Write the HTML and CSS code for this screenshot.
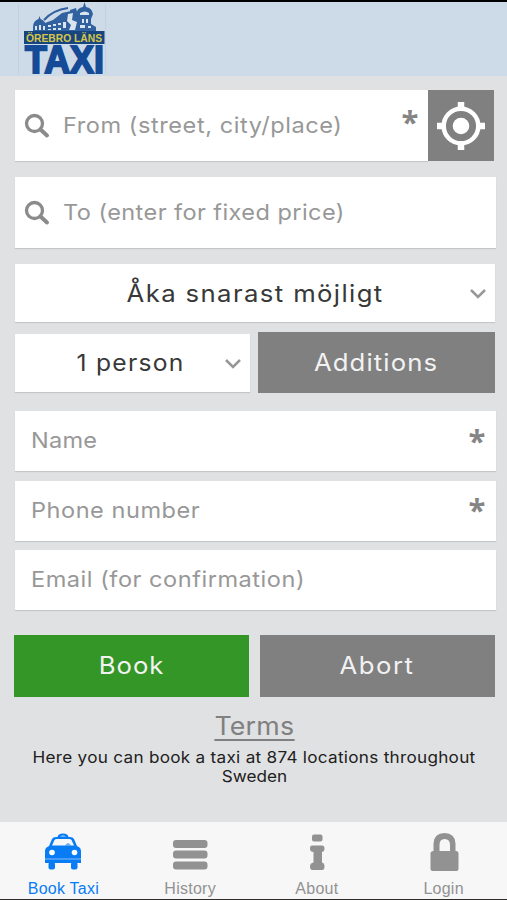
FILE: index.html
```
<!DOCTYPE html>
<html lang="en">
<head>
<meta charset="utf-8">
<title>Örebro Läns Taxi</title>
<link rel="stylesheet" href="styles.css">
</head>
<body>
<header class="header">
  <svg class="logo" width="90" height="74" viewBox="17 2 90 74" role="img" aria-label="Örebro Läns Taxi">
    <path d="M18.500 4V74M105.500 4V74" stroke="#c3d1df" stroke-width="1" fill="none"/>
    <g fill="#31619f">
      <path d="M33 31V27Q33 21 38.500 19L39.500 16L40.500 19Q46 21 46 27V31Z"/>
      <path d="M45 31V23L53 20L62 13L71 11V31Z"/>
      <path d="M70 10L76 8L77 12L81 18V31H70Z"/>
      <path d="M76 14Q77 8 83 7L84.500 2L86 7Q92 8 93 14L91 19V24L96 27V31H80V20Z"/>
    </g>
    <path d="M44 20Q53 10 68 8" fill="none" stroke="#31619f" stroke-width="2"/>
    <g fill="#d8e4ee">
      <path d="M35 26h2v4h-2zM39 25h2v5h-2zM43 26h2v4h-2zM48 25h3v2h-3zM53 24h3v2h-3zM58 23h3v2h-3zM48 29h3v1h-3zM53 28h3v2h-3zM58 28h3v2h-3zM63 22h3v6h-3z"/>
      <path d="M68 14L73 13L72 20L77 22L75 30H69L71 25L67 21ZM80 13Q85 10 89 13V15H80ZM82 19h2v4h-2zM86 19h2v4h-2zM80 25h5v3h-5zM88 26h3v2h-3z"/>
    </g>
    <rect x="24" y="31" width="80.500" height="13" fill="#17457f"/>
    <text class="logo-name" x="26" y="41.800" textLength="76" lengthAdjust="spacingAndGlyphs">ÖREBRO LÄNS</text>
    <text class="logo-taxi" x="25" y="72.500" textLength="79" lengthAdjust="spacingAndGlyphs">TAXI</text>
  </svg>
</header>
<main class="form">
  <div class="from">
    <div class="field tall">
      <svg class="search" width="26" height="26" viewBox="0 0 26 26"><circle cx="10.500" cy="10.500" r="8"/><path d="M16.500 16.500L23 22.500" class="handle"/></svg>
      <span class="hint t-from">From (street, city/place)</span>
      <span class="star raised">*</span>
    </div>
    <div class="locate">
      <svg width="48" height="48" viewBox="0 0 48 48"><circle cx="24" cy="24" r="17.300" fill="none" stroke="#fff" stroke-width="4.500"/><circle cx="24" cy="24" r="8.300" fill="#fff"/><path d="M24 0V8M24 40V48M0 24H8M40 24H48" stroke="#fff" stroke-width="6.500"/></svg>
    </div>
  </div>
  <div class="field tall to">
    <svg class="search" width="26" height="26" viewBox="0 0 26 26"><circle cx="10.500" cy="10.500" r="8"/><path d="M16.500 16.500L23 22.500" class="handle"/></svg>
    <span class="hint t-to">To (enter for fixed price)</span>
  </div>
  <div class="field select when"><span class="wide t-when">Åka snarast möjligt</span><svg class="chevron" width="18" height="12" viewBox="0 0 18 12"><path d="M2 2L9 9L16 2"/></svg></div>
  <div class="row options">
    <div class="field select persons"><span class="wide t-person">1 person</span><svg class="chevron" width="18" height="12" viewBox="0 0 18 12"><path d="M2 2L9 9L16 2"/></svg></div>
    <div class="button additions"><span class="wide t-add">Additions</span></div>
  </div>
  <div class="contacts">
    <div class="field contact"><span class="hint t-name">Name</span><span class="star">*</span></div>
    <div class="field contact"><span class="hint t-phone">Phone number</span><span class="star">*</span></div>
    <div class="field contact"><span class="hint t-email">Email (for confirmation)</span></div>
  </div>
  <div class="row actions">
    <div class="button book"><span class="wide t-book">Book</span></div>
    <div class="button abort"><span class="wide t-abort">Abort</span></div>
  </div>
  <div class="terms"><span class="wide t-terms">Terms</span></div>
  <p class="note"><span class="wide t-note">Here you can book a taxi at 874 locations throughout</span><br><span class="wide">Sweden</span></p>
</main>
<nav class="tabs">
  <div class="tab active">
    <svg width="40" height="40" viewBox="0 0 40 40" fill="#087cf5">
      <path d="M14.500 5Q15 1.500 20 1.500T25.500 5Z"/><path d="M17 4.500Q20 2.500 23 4.500Z" fill="#cfe5fb"/>
      <path fill-rule="evenodd" d="M6 14L9 7Q10 5 13 5H27Q30 5 31 7L34 14Q38 15.500 38 19V31H2V19Q2 15.500 6 14ZM9 13.500H31L28.500 8Q28 7 26 7H14Q12 7 11.500 8Z"/>
      <path d="M22 13.500Q25 8.500 28 13.500Z" opacity=".6"/>
      <circle cx="9" cy="20.500" r="2.800" fill="#fff"/><circle cx="31.500" cy="20.500" r="2.800" fill="#fff"/>
      <path d="M2 27H38" stroke="#84bcf6" stroke-width="1"/>
      <rect x="5.500" y="30" width="6.500" height="7.500" rx="2"/><rect x="28" y="30" width="6.500" height="7.500" rx="2"/>
    </svg><span>Book Taxi</span>
  </div>
  <div class="tab">
    <svg width="40" height="40" viewBox="0 0 40 40" fill="#929292"><rect x="3" y="8" width="34.500" height="8" rx="3"/><rect x="3" y="18.500" width="34.500" height="8" rx="3"/><rect x="3" y="29.500" width="34.500" height="8" rx="3"/></svg><span>History</span>
  </div>
  <div class="tab">
    <svg width="40" height="40" viewBox="0 0 40 40" fill="#929292"><rect x="15" y="2.500" width="10.500" height="7" rx="2"/><path d="M15.500 13.500H25Q27.500 13.500 27.500 16.500T25 20V30.500Q27.500 31 27.500 34.500T25 38H15.500Q13 38 13 34.500T16.500 30.500V20Q13 20 13 16.500T15.500 13.500Z"/></svg><span>About</span>
  </div>
  <div class="tab">
    <svg width="40" height="40" viewBox="0 0 40 40" fill="#929292"><path fill-rule="evenodd" d="M9.500 19V11.500Q10 1 20.500 1T31.500 11.500V19H32Q34.500 19 34.500 21.500V37Q34.500 39 32.500 39H8.500Q6.500 39 6.500 37V21.500Q6.500 19 9.500 19ZM15.500 19H26V13Q26 7 20.700 7T15.500 13Z"/></svg><span>Login</span>
  </div>
</nav>
</body>
</html>
```
FILE: styles.css
```
* { box-sizing: border-box; }
body {
  margin: 0;
  width: 507px;
  height: 900px;
  display: flex;
  flex-direction: column;
  overflow: hidden;
  background: #e0e1e3;
  font-family: Inter, "Liberation Sans", sans-serif;
  font-size: 22px;
  font-weight: 400;
}
svg { display: block; flex: none; }
span { white-space: nowrap; }
.header { height: 76px; flex: none; border-top: 2px solid #000; background: #cddbe9; padding-left: 17px; }
.logo { overflow: visible; }
.logo-name { font: bold 11px "Liberation Sans", sans-serif; fill: #d5c54b; }
.logo-taxi { font: bold 38px "Liberation Sans", sans-serif; fill: #154b96; stroke: #154b96; stroke-width: 2; }
.form { flex: 1; padding: 14px 12px 0 15px; }
.from { display: flex; width: 479px; }
.from .field { flex: 1; }
.locate { width: 66px; height: 71px; background: #808080; display: flex; align-items: center; justify-content: center; }
.field { background: #fff; box-shadow: 0 1px 1px #c5c6c7; display: flex; align-items: center; width: 481px; }
.tall { height: 71px; padding-left: 9px; }
.search { fill: none; stroke: #8b8b8b; stroke-width: 3.3; margin-right: 12.5px; }
.handle { stroke-width: 4; stroke-linecap: round; }
.hint { color: #989898; display: inline-block; margin-bottom: 2px; transform: scaleX(1.07); transform-origin: left; }
.wide { display: inline-block; transform: scaleX(1.07); }
.t-from { letter-spacing: .53px; }
.t-to { letter-spacing: .4px; }
.t-when { letter-spacing: 1.3px; }
.t-person { letter-spacing: 1.2px; }
.t-add { letter-spacing: 1.05px; }
.t-name { letter-spacing: .2px; }
.t-phone { letter-spacing: .5px; }
.t-email { letter-spacing: .5px; }
.t-book { letter-spacing: .9px; }
.t-abort { letter-spacing: 1.4px; }
.t-terms { letter-spacing: .2px; }
.t-note { letter-spacing: .27px; }
.star { margin-left: auto; width: 20px; height: 36px; margin-right: 9px; text-align: center; font: bold 31px/38px "Open Sans", sans-serif; color: #858585; }
.raised { margin-right: 8px; margin-top: -12px; }
.contact .star { margin-top: -5px; }
.to { margin-top: 16px; }
.select { height: 58px; position: relative; justify-content: center; color: #383838; }
.when { width: 480px; margin-top: 16px; font-size: 24px; }
.chevron { position: absolute; right: 8px; top: 24px; fill: none; stroke: #979797; stroke-width: 2.5; }
.row { display: flex; }
.options { margin-top: 10px; align-items: center; gap: 8px; }
.persons { width: 235px; font-size: 23px; }
.t-person { margin-right: 3px; }
.button { height: 61px; background: #808080; color: #f2f2f2; font-size: 24px; display: flex; align-items: center; justify-content: center; }
.additions { width: 237px; }
.contacts { margin-top: 18px; display: flex; flex-direction: column; gap: 9.500px; }
.contact { height: 60px; padding-left: 15.500px; }
.actions { margin: 25px 0 0 -1.500px; gap: 11px; }
.actions .button { height: 62px; padding-bottom: 2px; }
.book { width: 235.500px; background: #349626; }
.abort { width: 234.500px; }
.terms { width: 478px; margin-top: 12px; height: 35px; line-height: 34px; text-align: center; font-size: 25px; color: #808080; }
.terms span { border-bottom: 2px solid #808080; line-height: 28px; height: 29px; }
.note { width: 478px; margin: 4px 0 0; text-align: center; font-size: 16px; line-height: 19px; color: #202020; }
.tabs { height: 78px; flex: none; background: #f7f7f7; border-bottom: 1px solid #302c2c; display: grid; grid-template-columns: repeat(4, 1fr); }
.tab { display: flex; flex-direction: column; align-items: center; padding-top: 10px; font: 16px/18px "Liberation Sans", sans-serif; letter-spacing: .25px; color: #929292; }
.tab span { margin-top: 8px; }
.active { color: #087cf5; }
```
